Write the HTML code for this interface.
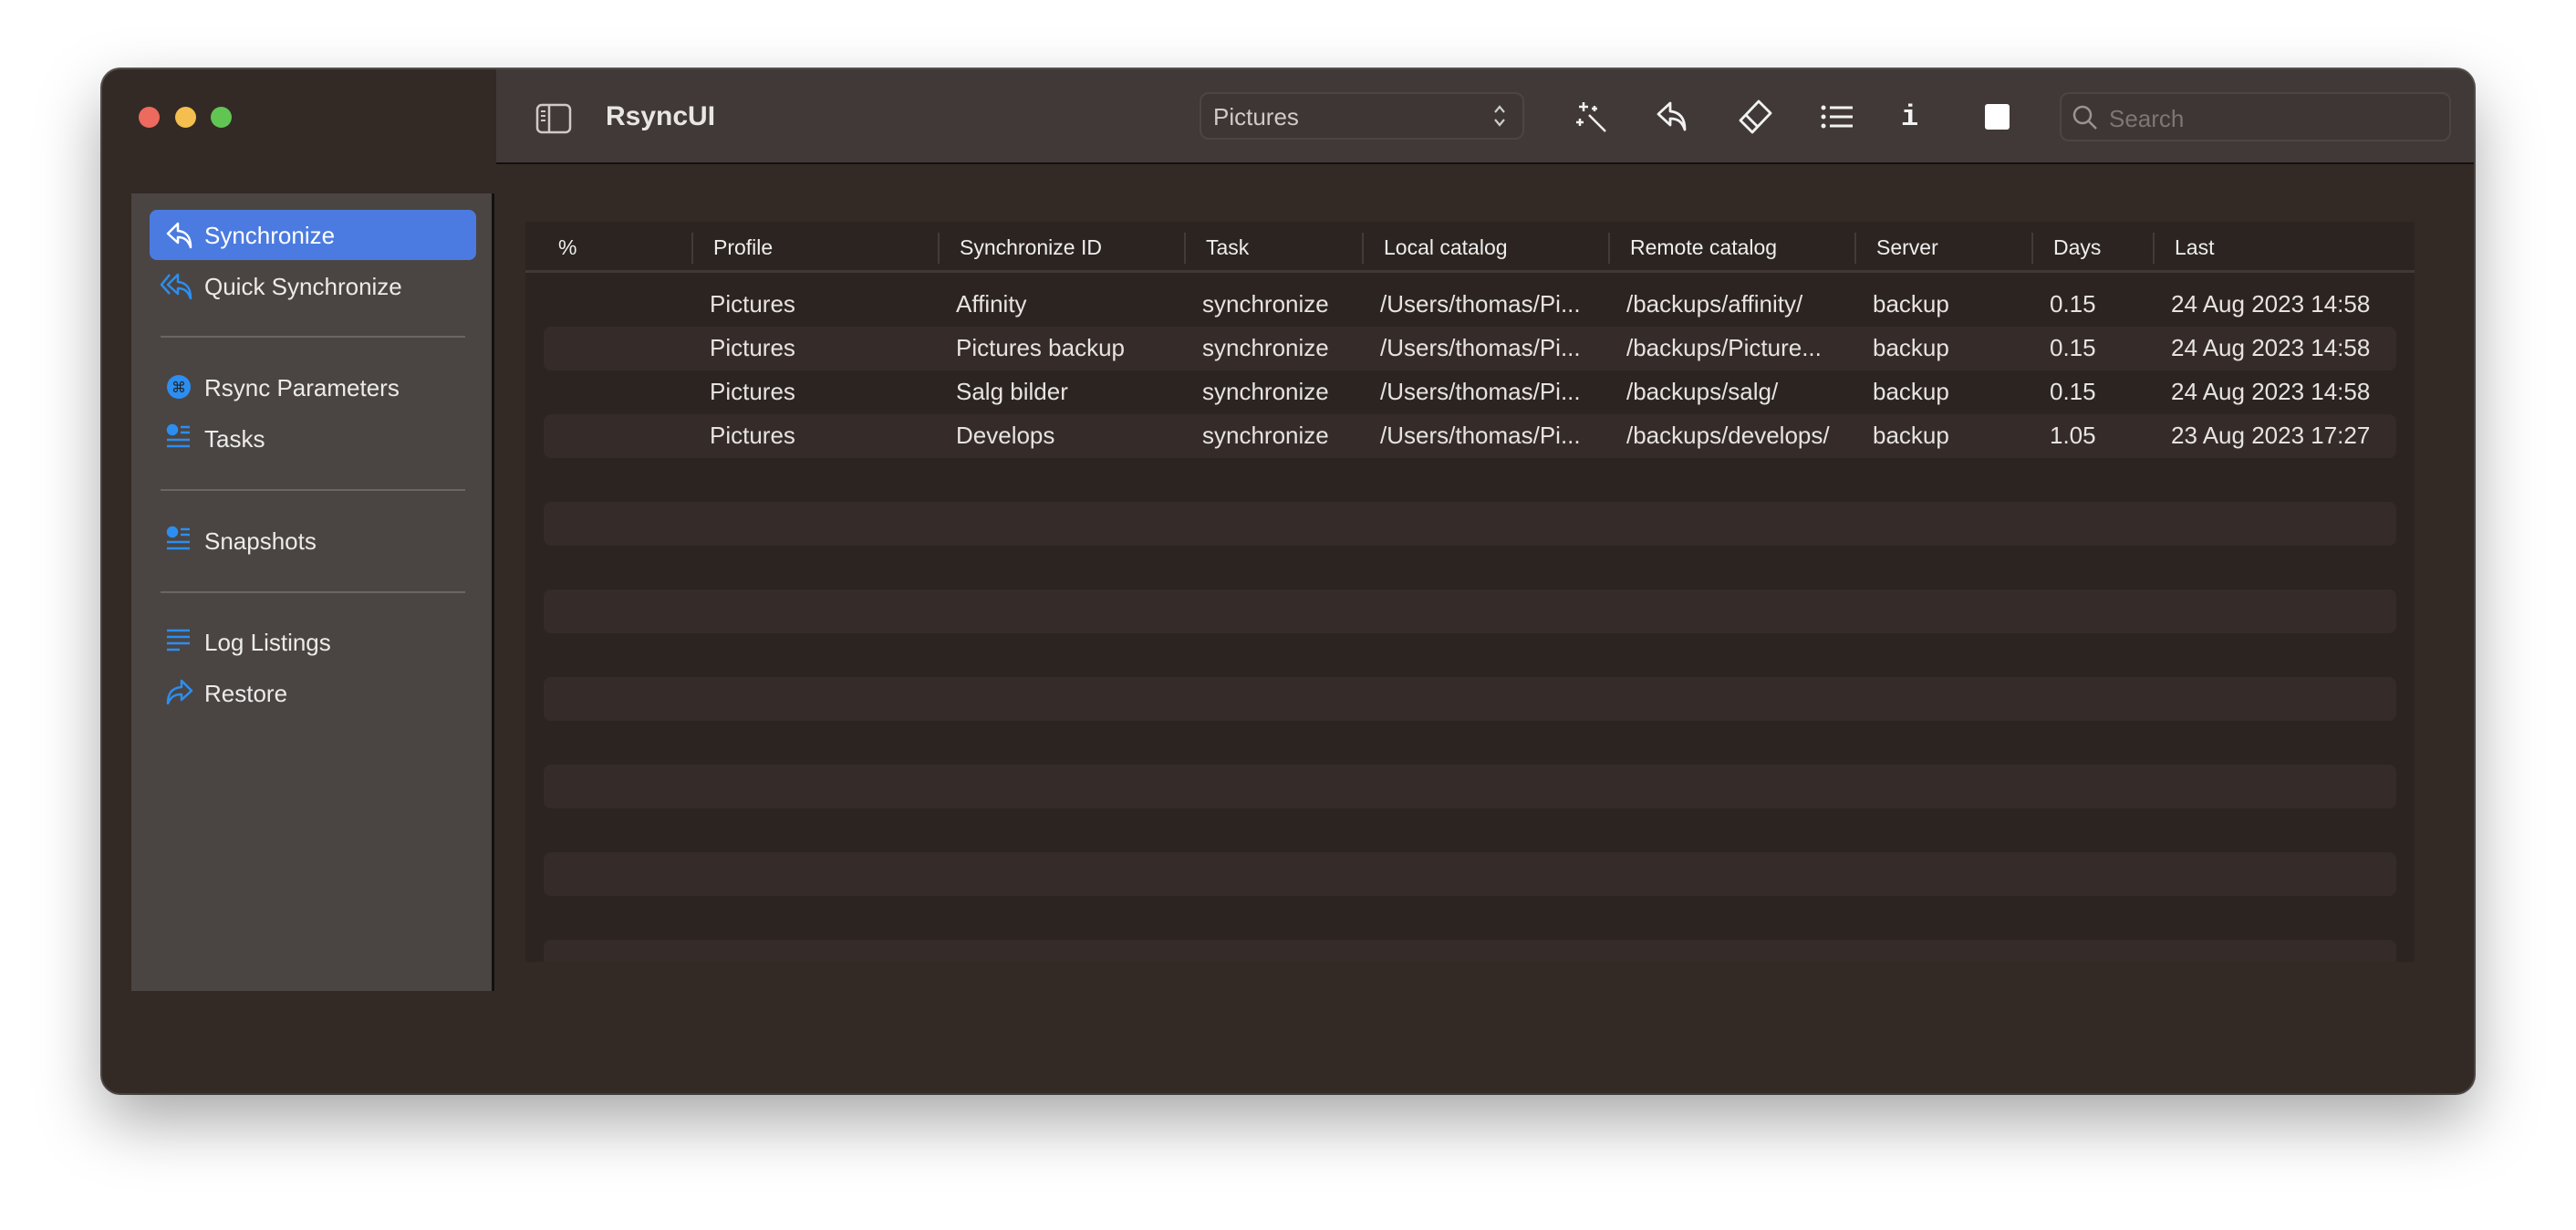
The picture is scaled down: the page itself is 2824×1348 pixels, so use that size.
<!DOCTYPE html>
<html><head><meta charset="utf-8"><style>
*{margin:0;padding:0;box-sizing:border-box}
body{width:2824px;height:1348px;background:#fff;position:relative;overflow:hidden;font-family:"Liberation Sans",sans-serif;color:#e8e5e3}
.a{position:absolute}
.win{left:112px;top:76px;width:2600px;height:1122px;background:#332a26;border-radius:20px;box-shadow:0 30px 70px rgba(0,0,0,.35),0 0 0 2px #5a5553;overflow:hidden}
.tb{left:432px;top:0;width:2168px;height:104px;background:#413937;border-bottom:2px solid #121010}
.side{left:32px;top:136px;width:398px;height:874px;background:#4a4543;border-right:3px solid #111}
.dot{width:23px;height:23px;border-radius:50%;top:41px}
.nav{font-size:26px;left:223px;color:#ecebea}
.hr{left:176px;width:334px;height:2px;background:#6b6664}
.tbl{left:464px;top:167px;width:2071px;height:811px;background:#2c2420;overflow:hidden}
.hd{top:0;height:56px;left:0;right:0;border-bottom:3px solid #413835}
.h{font-size:23px;top:15px;color:#eee}
.sep{top:12px;width:2px;height:34px;background:#443b37}
.stripe{left:20px;width:2031px;height:48px;background:#352c29;border-radius:8px}
.c{font-size:26px;color:#e6e3e1}
</style></head><body>
<div class="a win">
 <div class="a tb"></div>
 <div class="a dot" style="left:40px;background:#ec6a5e"></div>
 <div class="a dot" style="left:80px;background:#f4bf4f"></div>
 <div class="a dot" style="left:119px;background:#61c554"></div>
 <svg class="a" style="left:475px;top:37px" width="40" height="34" viewBox="0 0 40 34"><rect x="2" y="2" width="36" height="30" rx="5" fill="none" stroke="#cfcac8" stroke-width="2.5"/><line x1="15" y1="2" x2="15" y2="32" stroke="#cfcac8" stroke-width="2.5"/><path d="M6 9h5M6 14h5M6 19h5" stroke="#cfcac8" stroke-width="2"/></svg>
 <div class="a" style="left:552px;top:35px;font-size:30px;font-weight:bold;color:#e8e6e4">RsyncUI</div>
 <div class="a" style="left:1203px;top:25px;width:356px;height:52px;border:2px solid #4d4543;border-radius:10px;background:#3e3634"></div>
 <div class="a" style="left:1218px;top:37px;font-size:26px;color:#cfcac8">Pictures</div>
 <svg class="a" style="left:1524px;top:36px" width="16" height="30" viewBox="0 0 16 30"><path d="M3 11l5-6 5 6M3 19l5 6 5-6" fill="none" stroke="#ccc" stroke-width="2.2"/></svg>
 <svg class="a" style="left:1614px;top:34px" width="38" height="38" viewBox="0 0 38 38" fill="none" stroke="#f2f2f2" stroke-width="2.5"><path d="M16 16l18 18"/><path d="M10 2v10M5 7h10M22 6v6M19 9h6M6 20v8M2 24h8"/></svg>
 <svg class="a" style="left:1702px;top:33px" width="38" height="38" viewBox="0 0 38 38" fill="none" stroke="#f2f2f2" stroke-width="2.8" stroke-linejoin="round"><path d="M17 4L4 16l13 12v-7c8 0 13 3 16 12 0-12-5-19-16-20z"/></svg>
 <svg class="a" style="left:1792px;top:32px" width="40" height="40" viewBox="0 0 40 40" fill="none" stroke="#f2f2f2" stroke-width="2.8" stroke-linejoin="round"><path d="M24 3l13 13-20 21L4 24z"/><path d="M10 18l13 13"/></svg>
 <svg class="a" style="left:1884px;top:38px" width="36" height="28" viewBox="0 0 36 28" fill="#f2f2f2"><circle cx="3" cy="4" r="2.5"/><circle cx="3" cy="14" r="2.5"/><circle cx="3" cy="24" r="2.5"/><rect x="10" y="2.5" width="25" height="3"/><rect x="10" y="12.5" width="25" height="3"/><rect x="10" y="22.5" width="25" height="3"/></svg>
 <div class="a" style="left:1972px;top:34px;font-size:32px;font-family:'Liberation Mono',monospace;font-weight:bold;color:#f2f2f2">i</div>
 <div class="a" style="left:2064px;top:38px;width:27px;height:28px;background:#fff;border-radius:3px"></div>
 <div class="a" style="left:2146px;top:25px;width:429px;height:54px;border:2px solid #4d4543;border-radius:10px;background:#3e3634"></div>
 <svg class="a" style="left:2159px;top:38px" width="30" height="30" viewBox="0 0 30 30" fill="none" stroke="#9a9391" stroke-width="2.5"><circle cx="12" cy="12" r="9"/><path d="M18.5 18.5L27 27"/></svg>
 <div class="a" style="left:2200px;top:39px;font-size:26px;color:#7d7674">Search</div>

 <div class="a side"></div>
 <div class="a" style="left:52px;top:154px;width:358px;height:55px;background:#4b7be0;border-radius:8px"></div>
 <svg class="a" style="left:70px;top:166px" width="30" height="32" viewBox="0 0 30 32" fill="none" stroke="#fff" stroke-width="2.5" stroke-linejoin="round"><path d="M13 3L2 14l11 10v-6c7 0 11 3 14 11 0-11-4-17-14-18z"/></svg>
 <div class="a nav" style="left:112px;top:167px;color:#fff">Synchronize</div>
 <svg class="a" style="left:64px;top:222px" width="38" height="34" viewBox="0 0 38 34" fill="none" stroke="#2c8ef0" stroke-width="2.5" stroke-linejoin="round"><path d="M10 3L1 14l9 10"/><path d="M19 3L8 14l11 10v-6c7 0 11 3 14 11 0-11-4-17-14-18z"/></svg>
 <div class="a nav" style="left:112px;top:223px">Quick Synchronize</div>
 <div class="a hr" style="left:64px;top:292px"></div>
 <svg class="a" style="left:70px;top:334px" width="28" height="28"><circle cx="14" cy="14" r="13" fill="#2c8ef0"/><text x="14" y="20" font-size="16" text-anchor="middle" fill="#222" font-family="DejaVu Sans">⌘</text></svg>
 <div class="a nav" style="left:112px;top:334px">Rsync Parameters</div>
 <svg class="a" style="left:70px;top:388px" width="28" height="28" viewBox="0 0 28 28" fill="none" stroke="#2c8ef0" stroke-width="2.5"><circle cx="7" cy="7" r="5" fill="#2c8ef0"/><path d="M16 4h10M16 10h10M1 18h25M1 25h25"/></svg>
 <div class="a nav" style="left:112px;top:390px">Tasks</div>
 <div class="a hr" style="left:64px;top:460px"></div>
 <svg class="a" style="left:70px;top:500px" width="28" height="28" viewBox="0 0 28 28" fill="none" stroke="#2c8ef0" stroke-width="2.5"><circle cx="7" cy="7" r="5" fill="#2c8ef0"/><path d="M16 4h10M16 10h10M1 18h25M1 25h25"/></svg>
 <div class="a nav" style="left:112px;top:502px">Snapshots</div>
 <div class="a hr" style="left:64px;top:572px"></div>
 <svg class="a" style="left:70px;top:613px" width="28" height="26" viewBox="0 0 28 26" fill="none" stroke="#2c8ef0" stroke-width="2.5"><path d="M1 2h25M1 9h25M1 16h25M1 23h14"/></svg>
 <div class="a nav" style="left:112px;top:613px">Log Listings</div>
 <svg class="a" style="left:70px;top:668px" width="30" height="28" viewBox="0 0 30 28" fill="none" stroke="#2c8ef0" stroke-width="2.5" stroke-linejoin="round"><path d="M17 2l11 11-11 10v-6C9 17 5 20 2 27c0-11 4-17 15-18z"/></svg>
 <div class="a nav" style="left:112px;top:669px">Restore</div>

 <div class="a tbl">
  <div class="a hd"></div>
  <div class="a h" style="left:36px">%</div>
  <div class="a sep" style="left:182px"></div><div class="a h" style="left:206px">Profile</div>
  <div class="a sep" style="left:452px"></div><div class="a h" style="left:476px">Synchronize ID</div>
  <div class="a sep" style="left:722px"></div><div class="a h" style="left:746px">Task</div>
  <div class="a sep" style="left:917px"></div><div class="a h" style="left:941px">Local catalog</div>
  <div class="a sep" style="left:1187px"></div><div class="a h" style="left:1211px">Remote catalog</div>
  <div class="a sep" style="left:1457px"></div><div class="a h" style="left:1481px">Server</div>
  <div class="a sep" style="left:1651px"></div><div class="a h" style="left:1675px">Days</div>
  <div class="a sep" style="left:1784px"></div><div class="a h" style="left:1808px">Last</div>

  <div class="a stripe" style="top:115px"></div>
  <div class="a stripe" style="top:211px"></div>
  <div class="a stripe" style="top:307px"></div>
  <div class="a stripe" style="top:403px"></div>
  <div class="a stripe" style="top:499px"></div>
  <div class="a stripe" style="top:595px"></div>
  <div class="a stripe" style="top:691px"></div>
  <div class="a stripe" style="top:787px"></div>

  <div class="a" style="left:0;top:75px;width:100%">
   <div class="a c" style="left:202px">Pictures</div><div class="a c" style="left:472px">Affinity</div><div class="a c" style="left:742px">synchronize</div><div class="a c" style="left:937px">/Users/thomas/Pi...</div><div class="a c" style="left:1207px">/backups/affinity/</div><div class="a c" style="left:1477px">backup</div><div class="a c" style="left:1671px">0.15</div><div class="a c" style="left:1804px">24 Aug 2023 14:58</div>
  </div>
  <div class="a" style="left:0;top:123px;width:100%">
   <div class="a c" style="left:202px">Pictures</div><div class="a c" style="left:472px">Pictures backup</div><div class="a c" style="left:742px">synchronize</div><div class="a c" style="left:937px">/Users/thomas/Pi...</div><div class="a c" style="left:1207px">/backups/Picture...</div><div class="a c" style="left:1477px">backup</div><div class="a c" style="left:1671px">0.15</div><div class="a c" style="left:1804px">24 Aug 2023 14:58</div>
  </div>
  <div class="a" style="left:0;top:171px;width:100%">
   <div class="a c" style="left:202px">Pictures</div><div class="a c" style="left:472px">Salg bilder</div><div class="a c" style="left:742px">synchronize</div><div class="a c" style="left:937px">/Users/thomas/Pi...</div><div class="a c" style="left:1207px">/backups/salg/</div><div class="a c" style="left:1477px">backup</div><div class="a c" style="left:1671px">0.15</div><div class="a c" style="left:1804px">24 Aug 2023 14:58</div>
  </div>
  <div class="a" style="left:0;top:219px;width:100%">
   <div class="a c" style="left:202px">Pictures</div><div class="a c" style="left:472px">Develops</div><div class="a c" style="left:742px">synchronize</div><div class="a c" style="left:937px">/Users/thomas/Pi...</div><div class="a c" style="left:1207px">/backups/develops/</div><div class="a c" style="left:1477px">backup</div><div class="a c" style="left:1671px">1.05</div><div class="a c" style="left:1804px">23 Aug 2023 17:27</div>
  </div>
 </div>
</div>
</body></html>
